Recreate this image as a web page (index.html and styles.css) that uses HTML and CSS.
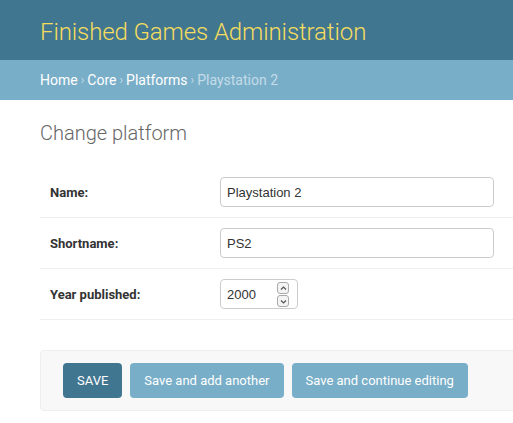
FILE: index.html
```html
<!DOCTYPE html>
<html>
<head>
<meta charset="utf-8">
<link rel="stylesheet" href="styles.css">
</head>
<body>
<div class="header">
  <h1 class="branding">Finished Games Administration</h1>
</div>
<div class="breadcrumbs">
  <a href="#">Home</a><span class="sep">›</span><a href="#">Core</a><span class="sep">›</span><a href="#">Platforms</a><span class="sep">›</span><span class="current">Playstation 2</span>
</div>
<div class="content">
  <h1 class="title">Change platform</h1>
  <form>
    <div class="fieldset">
      <div class="form-row">
        <label class="label">Name:</label>
        <input class="text-input" type="text" value="Playstation 2">
      </div>
      <div class="form-row">
        <label class="label">Shortname:</label>
        <input class="text-input" type="text" value="PS2">
      </div>
      <div class="form-row">
        <label class="label">Year published:</label>
        <span class="number-wrap">
          <input class="number-input" type="number" value="2000">
          <span class="spinner">
            <span class="spin-box"><svg width="9" height="9" viewBox="0 0 9 9"><path d="M2 5.5 L4.5 3 L7 5.5" fill="none" stroke="#555" stroke-width="1.2"/></svg></span>
            <span class="spin-box"><svg width="9" height="9" viewBox="0 0 9 9"><path d="M2 3.5 L4.5 6 L7 3.5" fill="none" stroke="#555" stroke-width="1.2"/></svg></span>
          </span>
        </span>
      </div>
    </div>
    <div class="submit-row">
      <button type="button" class="btn btn-default">SAVE</button>
      <button type="button" class="btn">Save and add another</button>
      <button type="button" class="btn">Save and continue editing</button>
    </div>
  </form>
</div>
</body>
</html>
```
FILE: styles.css
```css
html, body {
  margin: 0;
  padding: 0;
  background: #fff;
  font-family: Roboto, "Liberation Sans", sans-serif;
  color: #333;
  overflow: hidden;
}
.header {
  background: #417690;
  height: 60px;
  padding: 0 40px;
  display: flex;
  align-items: center;
}
.branding {
  margin: 0;
  font-size: 24px;
  font-weight: 300;
  color: #f5dd5d;
  line-height: 1;
  padding-top: 3px;
  letter-spacing: -0.1px;
}
.breadcrumbs {
  background: #79aec8;
  height: 40px;
  padding: 0 40px;
  display: flex;
  align-items: center;
  font-size: 14px;
  color: #c4dce8;
}
.breadcrumbs a {
  color: #fff;
  text-decoration: none;
}
.breadcrumbs .sep {
  margin: 0 3px;
  font-size: 12px;
}
.breadcrumbs .current {
  color: #c4dce8;
}
.content {
  padding: 20px 0 20px 40px;
  width: 600px;
}
.title {
  margin: 0 0 20px;
  font-size: 20px;
  font-weight: 300;
  color: #666;
  line-height: 27px;
}
.fieldset {
  margin: 0 0 30px;
}
.form-row {
  display: flex;
  align-items: center;
  padding: 10px;
  border-bottom: 1px solid #eee;
}
.label {
  width: 170px;
  flex: none;
  font-size: 13px;
  font-weight: 700;
  color: #333;
}
.text-input, .number-input {
  box-sizing: border-box;
  height: 30px;
  border: 1px solid #ccc;
  border-radius: 4px;
  padding: 5px 6px;
  font-family: "Liberation Sans", Arial, sans-serif;
  font-size: 13px;
  color: #333;
  margin: 0;
  outline: none;
}
.text-input {
  width: 274px;
}
.number-wrap {
  position: relative;
  display: inline-block;
  height: 30px;
}
.number-input {
  width: 78px;
  -moz-appearance: textfield;
}
.number-input::-webkit-inner-spin-button,
.number-input::-webkit-outer-spin-button {
  -webkit-appearance: none;
  margin: 0;
}
.spinner {
  position: absolute;
  left: 57px;
  top: 3px;
  display: flex;
  flex-direction: column;
  gap: 1px;
}
.spin-box {
  box-sizing: border-box;
  width: 12px;
  height: 12px;
  border: 1px solid #aaa;
  border-radius: 3px;
  background: #f4f4f4;
  display: flex;
  align-items: center;
  justify-content: center;
}
.spin-box svg {
  display: block;
}
.submit-row {
  box-sizing: border-box;
  height: 61px;
  background: #f8f8f8;
  border: 1px solid #eee;
  border-radius: 4px;
  padding: 12px 14px 12px 22px;
  display: flex;
  gap: 8px;
}
.btn {
  height: 35px;
  border: none;
  border-radius: 4px;
  background: #79aec8;
  color: #fff;
  font-family: Roboto, "Liberation Sans", sans-serif;
  font-size: 13px;
  padding: 0 14px;
  margin: 0;
}
.btn-default {
  background: #417690;
}
```
